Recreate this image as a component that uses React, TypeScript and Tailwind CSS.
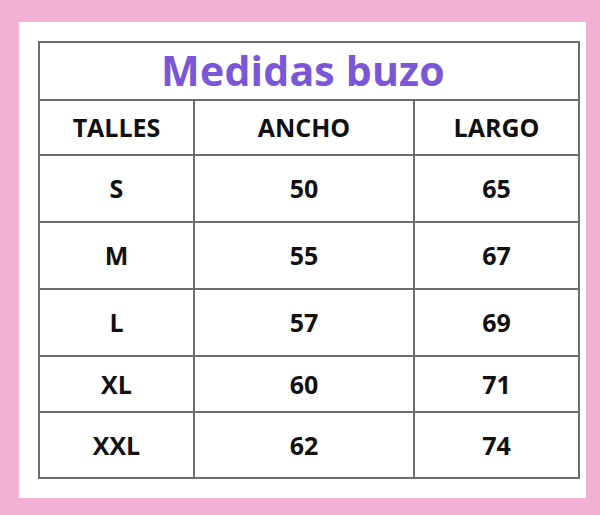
import React from "react";

const rows = [
  ["S", "50", "65", "h-[65px]"],
  ["M", "55", "67", "h-[65px]"],
  ["L", "57", "69", "h-[65px]"],
  ["XL", "60", "71", "h-[54px]"],
  ["XXL", "62", "74", "h-[64px]"],
];

export default function App() {
  return (
    <div
      className="w-[600px] h-[515px] bg-[#f0b1d3] pt-[22px] pl-[19px]"
      style={{ fontFamily: '"Open Sans", "Liberation Sans", sans-serif' }}
    >
      <div className="w-[567px] h-[476px] bg-white pt-[19px] pl-[19px]">
        <div className="w-[542px] bg-[#6e6e6e] p-[2px] flex flex-col gap-[2px]">
          <div className="h-[56px] bg-white flex items-center justify-center text-[#7a56d8] font-bold text-[41px] tracking-[0.2px] leading-none pb-[2px] pr-[12px]">
            Medidas buzo
          </div>
          <div className="grid grid-cols-[153px_218px_163px] gap-[2px] h-[53px]">
            {["TALLES", "ANCHO", "LARGO"].map((t) => (
              <div key={t} className="bg-white flex items-center justify-center font-bold text-[25px] text-[#111] leading-none">
                {t}
              </div>
            ))}
          </div>
          {rows.map((r) => (
            <div key={r[0]} className={`grid grid-cols-[153px_218px_163px] gap-[2px] ${r[3]}`}>
              {r.slice(0, 3).map((c, i) => (
                <div key={i} className="bg-white flex items-center justify-center font-bold text-[25px] text-[#111] leading-none">
                  {c}
                </div>
              ))}
            </div>
          ))}
        </div>
      </div>
    </div>
  );
}
